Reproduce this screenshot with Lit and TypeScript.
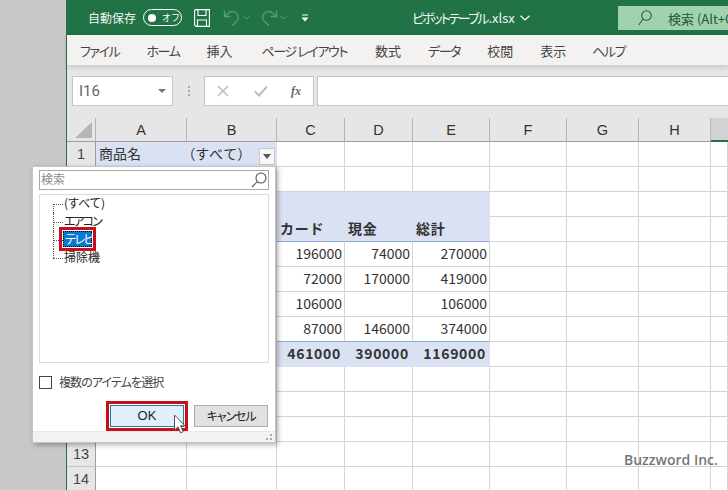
import { LitElement, html, css, svg } from "lit";
import { customElement } from "lit/decorators.js";

const COLS = ["A", "B", "C", "D", "E", "F", "G", "H", "I"];
const WIDTHS = [91, 90, 68, 68, 77, 77, 72, 72, 17];

type Cell = { t?: string; c?: string };
const rows: Record<number, Record<string, Cell>> = {
  1: { A: { t: "商品名", c: "band left" }, B: { t: "（すべて）", c: "band left prop" } },
  3: { C: { c: "band" }, D: { c: "band" }, E: { c: "band" } },
  4: {
    C: { t: "カード", c: "band left bold under" },
    D: { t: "現金", c: "band left bold under" },
    E: { t: "総計", c: "band left bold under" },
  },
  5: { C: { t: "196000" }, D: { t: "74000" }, E: { t: "270000" } },
  6: { C: { t: "72000" }, D: { t: "170000" }, E: { t: "419000" } },
  7: { C: { t: "106000" }, E: { t: "106000" } },
  8: { C: { t: "87000", c: "under" }, D: { t: "146000", c: "under" }, E: { t: "374000", c: "under" } },
  9: {
    C: { t: "461000", c: "band bold" },
    D: { t: "390000", c: "band bold" },
    E: { t: "1169000", c: "band bold" },
  },
};

@customElement("app-root")
export class AppRoot extends LitElement {
  static styles = css`
    :host {
      display: flex;
      width: 728px;
      height: 490px;
      overflow: hidden;
      position: relative;
      background: #c8c8c8;
      font-family: "Noto Sans CJK JP", "Noto Sans", sans-serif;
      color: #333;
    }
    .desk { width: 66px; flex: none; }
    .excel {
      flex: 1;
      min-width: 0;
      display: flex;
      flex-direction: column;
      background: #e6e6e6;
      border-left: 1px solid #217346;
    }
    .title {
      height: 35px;
      flex: none;
      background: #217346;
      color: #f0f6f2;
      display: flex;
      align-items: center;
      font-size: 12px;
      position: relative;
    }
    .autosave { margin-left: 21px; width: 49px; white-space: nowrap; line-height: 16px; }
    .toggle {
      margin-left: 6px;
      height: 15px;
      border: 1px solid #fff;
      border-radius: 9px;
      display: flex;
      align-items: center;
      gap: 6px;
      font-size: 9px;
      padding-left: 4px;
      box-sizing: content-box;
      flex: none;
      width: 33px;
      color: #fff;
    }
    .knob { width: 8px; height: 8px; background: #fff; border-radius: 50%; flex: none; }
    .title svg { flex: none; display: block; }
    .save { margin-left: 12px; }
    .undo { margin-left: 13px; }
    .c1 { margin-left: 3px; }
    .redo { margin-left: 11px; }
    .c2 { margin-left: 2px; }
    .qat { margin-left: 14px; }
    .fname {
      margin-left: 103px;
      white-space: nowrap;
      display: flex;
      align-items: center;
      gap: 5px;
      width: 206px;
      line-height: 16px;
      font-size: 13px;
      font-feature-settings: "palt";
    }
    .fname b { font-weight: 400; letter-spacing: -2.1px; margin-right: 1px; }
    .search {
      flex: 1;
      height: 24px;
      margin-top: 1px;
      background: #a0d2ae;
      color: #215a3a;
      display: flex;
      align-items: center;
      white-space: nowrap;
      overflow: hidden;
      padding-left: 20px;
      gap: 16px;
      font-size: 13px;
    }
    .menu {
      height: 30px;
      flex: none;
      background: #f3f2f1;
      display: flex;
      align-items: center;
      font-size: 13px;
      font-feature-settings: "palt";
      color: #444;
      padding-left: 13px;
      box-shadow: 0 2px 5px rgba(0, 0, 0, 0.14);
      position: relative;
      z-index: 1;
      white-space: nowrap;
    }
    .menu span { flex: none; }
    .menu .kana { letter-spacing: -1.4px; }
    .fbar {
      height: 53px;
      flex: none;
      display: flex;
      padding: 11px 0 12px 5px;
      box-sizing: border-box;
      align-items: stretch;
    }
    .namebox {
      width: 101px;
      background: #fff;
      border: 1px solid #c6c6c6;
      box-sizing: border-box;
      display: flex;
      align-items: center;
      justify-content: space-between;
      padding: 0 6px;
      font: 15px Roboto, sans-serif;
      color: #666;
    }
    .caret { width: 0; height: 0; border: 4px solid transparent; border-top: 4px solid #777; border-bottom: 0; }
    .dots { width: 31px; display: flex; flex-direction: column; align-items: center; justify-content: center; gap: 2px; }
    .dots i { width: 2px; height: 2px; background: #a8a8a8; }
    .fbtn {
      width: 110px;
      background: #fff;
      border: 1px solid #c6c6c6;
      box-sizing: border-box;
      display: flex;
      align-items: center;
      padding-left: 12px;
      color: #bbb;
    }
    .fx { font: italic bold 12px "Liberation Serif", serif; color: #666; margin-left: 23px; }
    .finput {
      flex: 1;
      margin-left: 3px;
      background: #fff;
      border: 1px solid #c6c6c6;
      border-right: 0;
    }
    .sheet {
      display: grid;
      grid-template-rows: 24px repeat(14, 25px);
      background: #fff;
      font-size: 14px;
      color: #333;
    }
    .corner, .ch, .rn { background: #e6e6e6; box-sizing: border-box; }
    .corner { border-right: 1px solid #b4b4b4; border-bottom: 1px solid #9d9d9d; position: relative; }
    .corner svg { position: absolute; left: 8px; top: 4px; }
    .ch {
      border-bottom: 1px solid #9d9d9d;
      border-right: 1px solid #b4b4b4;
      display: flex;
      align-items: center;
      justify-content: center;
      font: 14.5px "Liberation Sans", sans-serif;
      color: #333;
    }
    .ch.sel { background: #d2d2d2; border-bottom: 2px solid #217346; border-right: 0; }
    .rn {
      border-right: 1px solid #9d9d9d;
      border-bottom: 1px solid #c6c6c6;
      display: flex;
      align-items: center;
      justify-content: center;
      font: 14.5px "Liberation Sans", sans-serif;
      color: #444;
    }
    .cell {
      box-sizing: border-box;
      border-right: 1px solid #d4d4d4;
      border-bottom: 1px solid #d4d4d4;
      display: flex;
      align-items: center;
      justify-content: flex-end;
      padding: 0 2px 2px 3px;
      white-space: nowrap;
      line-height: 20px;
      overflow: hidden;
      position: relative;
    }
    .cell.band { background: #d9e1f2; border-right-color: #d9e1f2; border-bottom-color: #d9e1f2; }
    .cell.left { justify-content: flex-start; padding-bottom: 3px; }
    .cell.prop { font-feature-settings: "palt"; padding-left: 1px; letter-spacing: 1.1px; }
    .cell.bold { font-weight: 700; letter-spacing: 0.7px; padding-right: 3px; }
    .cell.under { border-bottom: 1px solid #8ea9db; }
    .wm {
      position: absolute;
      left: 624px;
      top: 450px;
      font: 600 14px "Open Sans", sans-serif;
      color: rgba(90, 90, 90, 0.85);
      white-space: nowrap;
      line-height: 20px;
    }
    .fdrop {
      position: absolute;
      left: 259px;
      top: 148px;
      width: 16px;
      height: 17px;
      box-sizing: border-box;
      background: #f7f7f7;
      border: 1px solid #c8c8c8;
      display: flex;
      align-items: center;
      justify-content: center;
    }
    .fdrop i { width: 0; height: 0; border: 4px solid transparent; border-top: 5px solid #555; border-bottom: 0; }
    .popup {
      position: absolute;
      left: 32px;
      top: 166px;
      width: 244px;
      height: 277px;
      box-sizing: border-box;
      background: #fff;
      border: 1px solid #c4c4c4;
      box-shadow: 2px 2px 5px rgba(0, 0, 0, 0.3);
      display: flex;
      flex-direction: column;
      padding: 3px 6px 0 6px;
      font-size: 12px;
      font-feature-settings: "palt";
      color: #222;
    }
    .sbox {
      height: 20px;
      flex: none;
      box-sizing: border-box;
      border: 1px solid #a8a8a8;
      display: flex;
      align-items: center;
      justify-content: space-between;
      padding: 0 1px 0 1px;
      color: #8c8c8c;
    }
    .sbox span { padding-bottom: 3px; line-height: 14px; }
    .tree {
      margin-top: 4px;
      height: 169px;
      flex: none;
      box-sizing: border-box;
      border: 1px solid #dcdcdc;
      padding: 0 0 0 24px;
    }
    .node {
      height: 18px;
      display: flex;
      align-items: center;
      position: relative;
      line-height: 16px;
      white-space: nowrap;
    }
    .node::before {
      content: "";
      position: absolute;
      left: -11px;
      top: 9px;
      width: 10px;
      border-top: 1px dotted #555;
    }
    .node::after {
      content: "";
      position: absolute;
      left: -11px;
      top: 0;
      height: 18px;
      border-left: 1px dotted #555;
    }
    .node:first-child::after { top: 9px; height: 9px; }
    .node:last-child::after { height: 9px; }
    .node span { position: relative; top: -1px; }
    .node .kana { letter-spacing: -2px; }
    .node .picked {
      z-index: 1;
      margin-left: -1px;
      background: #0a78d0;
      color: #fff;
      height: 16px;
      display: block;
      line-height: 14px;
      padding: 0 0 0 1px;
      border: 1px dotted #000;
      box-sizing: border-box;
      outline: 3px solid #c8101a;
      outline-offset: 1px;
      width: 29px;
      letter-spacing: -1.5px;
    }
    .multi {
      flex: none;
      margin-top: 12px;
      height: 15px;
      display: flex;
      align-items: center;
      gap: 7px;
      color: #444;
    }
    .multi span { padding-bottom: 2px; line-height: 13px; letter-spacing: -0.9px; }
    .box { width: 13px; height: 13px; box-sizing: border-box; border: 1px solid #444; background: #fff; flex: none; }
    .btns {
      flex: none;
      margin-top: 15px;
      display: flex;
      justify-content: flex-end;
      gap: 10px;
      padding-right: 1px;
    }
    .btn {
      height: 22px;
      box-sizing: border-box;
      width: 74px;
      display: flex;
      align-items: center;
      justify-content: center;
      border: 1px solid #adadad;
      background: #e1e1e1;
      font-size: 12px;
      letter-spacing: -1.1px;
      color: #222;
      padding-bottom: 1px;
    }
    .btn.ok {
      background: #e0f0fb;
      border-color: #2a7a9c;
      outline: 3px solid #c8101a;
      outline-offset: 1px;
      font: 13px "Liberation Sans", sans-serif;
      letter-spacing: 0;
    }
    .foot {
      margin: auto -6px 0;
      height: 10px;
      flex: none;
      background: #f2f2f2;
      position: relative;
      border-top: 1px solid #e8e8e8;
      display: flex;
      justify-content: flex-end;
      align-items: center;
      padding-right: 3px;
    }
    .cursor { position: absolute; left: 173px; top: 414px; }
  `;

  private undoIcon(flip: boolean) {
    return html`<svg class=${flip ? "redo" : "undo"} width="17" height="18" viewBox="0 0 17 18" fill="none" stroke="#5f9a78" stroke-width="1.3">
      <g transform=${flip ? "translate(17,0) scale(-1,1)" : ""}>
        ${svg`<path d="M1.5 1.5V7.5H7.5"/><path d="M1.8 7.3 6 3.6C8.2 1.8 11.8 2.3 13.8 4.6 16 7.2 15.5 11 13 13L9 16.8"/>`}
      </g>
    </svg>`;
  }

  private chev(cls: string) {
    return html`<svg class=${cls} width="7" height="5" viewBox="0 0 7 5" fill="none" stroke="#5f9a78" stroke-width="1"><path d="M.5 1 3.5 4 6.5 1"/></svg>`;
  }

  private renderCell(r: number, col: string) {
    const d = rows[r]?.[col];
    return html`<div class="cell ${d?.c ?? ""}">${d?.t ?? ""}</div>`;
  }

  render() {
    const rowNums = Array.from({ length: 14 }, (_, i) => i + 1);
    const menu: [string, number, string][] = [
      ["ファイル", 0, "kana"], ["ホーム", 27, "kana"], ["挿入", 27, ""], ["ページ レイアウト", 29, "kana"], ["数式", 28, ""],
      ["データ", 27, "kana"], ["校閲", 27, ""], ["表示", 27, ""], ["ヘルプ", 26, "kana"],
    ];
    // Rows 2-12 have their headers entirely behind the open filter popup.
    const visibleNum = (r: number) => (r === 1 || r >= 13 ? r : "");
    return html`
      <div class="desk"></div>
      <div class="excel">
        <div class="title">
          <span class="autosave">自動保存</span>
          <span class="toggle"><i class="knob"></i><span>オフ</span></span>
          <svg class="save" width="16" height="18" viewBox="0 0 16 18" fill="none" stroke="#fff" stroke-width="1.1">
            <path d="M.6 1.6A1 1 0 0 1 1.6.6H15.4V17.4H2L.6 16Z"/><path d="M4 .6V6.5H12V.6"/><path d="M3.5 17.4V11H12.5V17.4"/>
          </svg>
          ${this.undoIcon(false)}${this.chev("c1")}${this.undoIcon(true)}${this.chev("c2")}
          <svg class="qat" width="8" height="8" viewBox="0 0 8 8"><path d="M1 .5H7V1.5H1Z" fill="#fff"/><path d="M.5 3.5H7.5L4 7.5Z" fill="#fff"/></svg>
          <div class="fname">
            <span><b>ピボットテーブル</b>.xlsx</span>
            <svg width="10" height="6" viewBox="0 0 10 6" fill="none" stroke="#fff" stroke-width="1.2"><path d="M.5.8 5 5 9.5.8"/></svg>
          </div>
          <div class="search">
            <svg width="14" height="16" viewBox="0 0 14 16" fill="none" stroke="#2d5f42" stroke-width="1.1"><circle cx="8.5" cy="5.5" r="4.8"/><path d="M5 9 .8 15"/></svg>
            <span>検索 (Alt+Q)</span>
          </div>
        </div>
        <div class="menu">
          ${menu.map(([t, m, k]) => html`<span class=${k} style="margin-left:${m}px">${t}</span>`)}
        </div>
        <div class="fbar">
          <div class="namebox"><span>I16</span><i class="caret"></i></div>
          <div class="dots"><i></i><i></i><i></i></div>
          <div class="fbtn">
            <svg width="12" height="12" viewBox="0 0 12 12" stroke="#bdbdbd" stroke-width="1.6"><path d="M1 1 11 11M11 1 1 11"/></svg>
            <svg style="margin-left:25px" width="14" height="12" viewBox="0 0 14 12" fill="none" stroke="#bdbdbd" stroke-width="2"><path d="M1 6.5 5 10.5 13 1.5"/></svg>
            <span class="fx">fx</span>
          </div>
          <div class="finput"></div>
        </div>
        <div class="sheet" style="grid-template-columns:29px ${WIDTHS.map((w) => w + "px").join(" ")}">
          <div class="corner"><svg width="18" height="17" viewBox="0 0 18 17"><path d="M17 0V16H0Z" fill="#b5b5b5"/></svg></div>
          ${COLS.map((c) => html`<div class="ch ${c === "I" ? "sel" : ""}">${c === "I" ? "" : c}</div>`)}
          ${rowNums.map(
            (r) => html`<div class="rn">${visibleNum(r)}</div>${COLS.map((c) => this.renderCell(r, c))}`
          )}
        </div>
      </div>
      <div class="fdrop"><i></i></div>
      <div class="wm">Buzzword Inc.</div>
      <div class="popup">
        <div class="sbox">
          <span>検索</span>
          <svg width="16" height="16" viewBox="0 0 16 16" fill="none" stroke="#555" stroke-width="1.1"><circle cx="10" cy="6" r="5"/><path d="M6.4 9.6 1 15"/></svg>
        </div>
        <div class="tree">
          <div class="node"><span>(すべて)</span></div>
          <div class="node"><span class="kana">エアコン</span></div>
          <div class="node"><span class="picked">テレビ</span></div>
          <div class="node"><span>掃除機</span></div>
        </div>
        <div class="multi"><i class="box"></i><span>複数のアイテムを選択</span></div>
        <div class="btns">
          <div class="btn ok">OK</div>
          <div class="btn">キャンセル</div>
        </div>
        <div class="foot">
          <svg width="6" height="6" viewBox="0 0 6 6" fill="#a8a8a8"><rect x="4" y="0" width="2" height="2"/><rect x="0" y="4" width="2" height="2"/><rect x="4" y="4" width="2" height="2"/></svg>
        </div>
      </div>
      <svg class="cursor" width="15" height="22" viewBox="0 0 15 22">
        <path d="M1.5 1V16L5 12.8 7.6 18.8 10.2 17.6 7.6 11.8H12Z" fill="#fff" stroke="#555" stroke-width="1"/>
      </svg>
    `;
  }
}
